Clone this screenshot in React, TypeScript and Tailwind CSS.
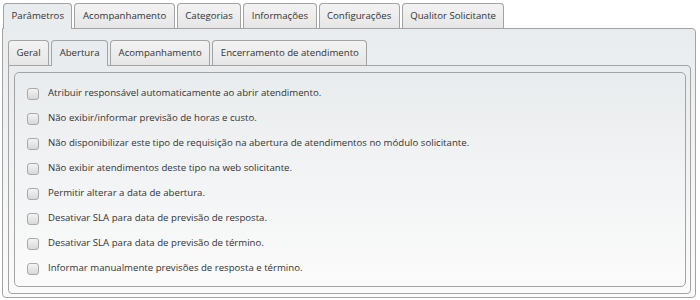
import React from "react";

const outerTabs = [
  "Parâmetros",
  "Acompanhamento",
  "Categorias",
  "Informações",
  "Configurações",
  "Qualitor Solicitante",
];
const innerTabs = ["Geral", "Abertura", "Acompanhamento", "Encerramento de atendimento"];
const options = [
  "Atribuir responsável automaticamente ao abrir atendimento.",
  "Não exibir/informar previsão de horas e custo.",
  "Não disponibilizar este tipo de requisição na abertura de atendimentos no módulo solicitante.",
  "Não exibir atendimentos deste tipo na web solicitante.",
  "Permitir alterar a data de abertura.",
  "Desativar SLA para data de previsão de resposta.",
  "Desativar SLA para data de previsão de término.",
  "Informar manualmente previsões de resposta e término.",
];

function Tab({ label, active }: { label: string; active?: boolean }) {
  return (
    <div
      className={
        "relative flex h-[25px] items-center rounded-t-[4px] border border-b-0 border-[#a3a3a3] px-[7.5px] text-[9.65px] text-[#333] " +
        (active
          ? "z-10 mb-[-1px] h-[26px] bg-[#e9ecee]"
          : "bg-gradient-to-b from-[#f3f3f3] to-[#e6e6e6]")
      }
    >
      {label}
    </div>
  );
}

export default function App() {
  return (
    <div
      className="h-[300px] w-[700px] bg-white pl-[2px] pt-[3px]"
      style={{ fontFamily: '"Open Sans", "Noto Sans", sans-serif' }}
    >
      <div className="flex w-[694px] items-end gap-[2px] pl-[1px]">
        {outerTabs.map((t, i) => (
          <Tab key={t} label={t} active={i === 0} />
        ))}
      </div>
      <div className="h-[270px] w-[694px] rounded-tr-[4px] rounded-b-[4px] border border-[#a3a3a3] bg-gradient-to-b from-[#e9ecee] to-[#fbfbfb] pb-[4px] pl-[5px] pr-[4px] pt-[11px]">
        <div className="flex items-end gap-[2px]">
          {innerTabs.map((t, i) => (
            <Tab key={t} label={t} active={i === 1} />
          ))}
        </div>
        <div className="h-[229px] rounded-tr-[4px] rounded-b-[4px] border border-[#a3a3a3] bg-gradient-to-b from-[#e9ecee] to-[#fbfbfb] pb-[6px] pl-[5px] pr-[4px] pt-[6px]">
          <div className="h-[215px] rounded-[5px] border border-[#a3a3a3] bg-gradient-to-b from-[#e9ecee] to-[#fbfbfb] pl-[12px] pt-[8px]">
            {options.map((o) => (
              <div key={o} className="flex h-[25px] items-center">
                <span className="mr-[9px] box-border h-[12px] w-[12px] shrink-0 rounded-[3px] border border-[#a9a9a9] bg-gradient-to-b from-[#f4f4f4] to-[#d8d8d8]" />
                <span className="text-[9.65px] text-[#333]">{o}</span>
              </div>
            ))}
          </div>
        </div>
      </div>
    </div>
  );
}
